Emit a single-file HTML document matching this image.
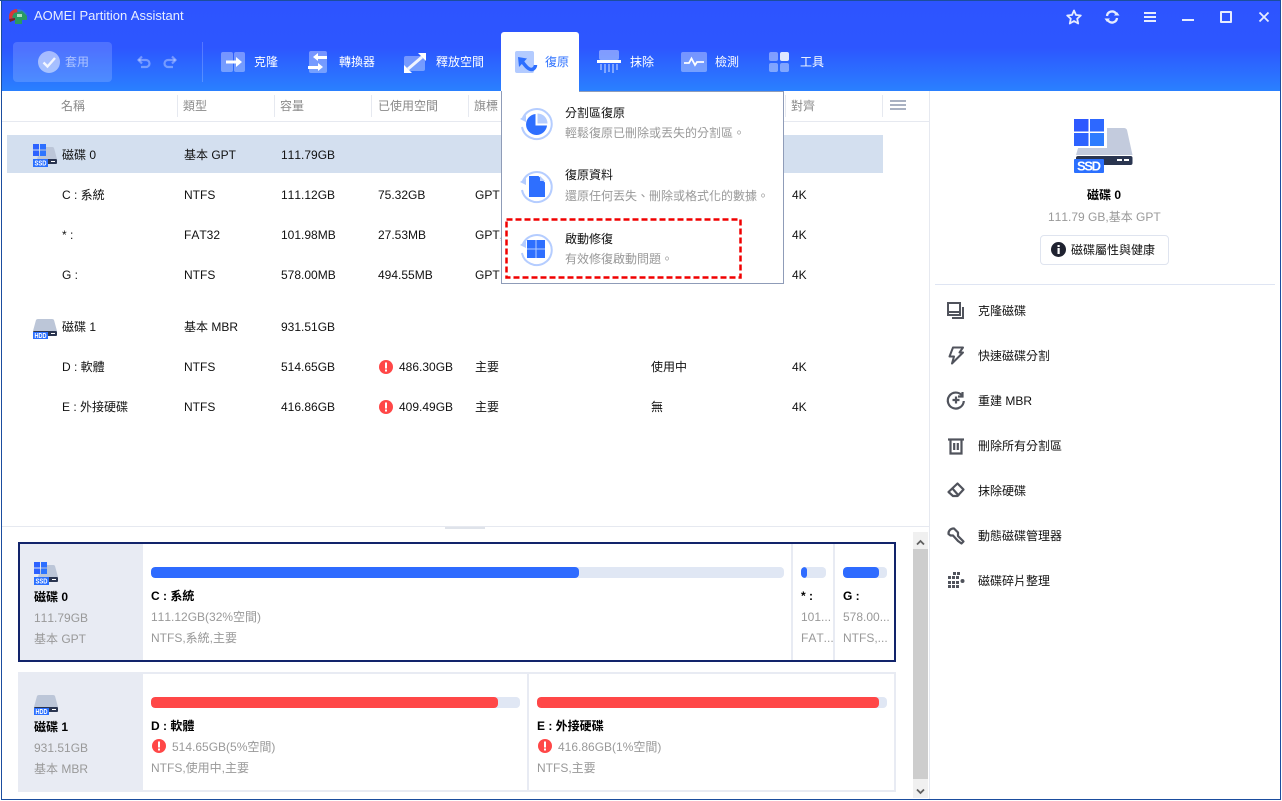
<!DOCTYPE html>
<html lang="zh-Hant"><head><meta charset="utf-8"><title>AOMEI Partition Assistant</title>
<style>
html,body{margin:0;padding:0;background:#fff}
body{width:1282px;height:801px;position:relative;overflow:hidden;font-family:"Liberation Sans","Noto Sans CJK SC",sans-serif;font-size:12px;color:#111;font-kerning:none}
.a{position:absolute}
.t{position:absolute;white-space:nowrap;line-height:16px;font-size:12px}
.g{color:#999}.h{color:#8a8a8a}.w{color:#fff}.b{font-weight:bold;color:#000}
.l{position:absolute;background:#e6e9f0}
.bar{position:absolute;height:11px;border-radius:4px;background:#e0e7f4;overflow:hidden}
.bar i{display:block;height:11px;border-radius:4px}
svg{position:absolute;overflow:visible}
</style></head><body>

<!-- header -->
<div class="a" style="left:1px;top:0;width:1280px;height:91px;background:linear-gradient(#2d54ff 0,#2d56ff 52%,#2a80ff 100%)"></div>
<div class="a" style="left:0;top:0;width:1281px;height:1px;background:#1b4d9e"></div>
<div class="a" style="left:1px;top:0;width:1px;height:800px;background:#1b4d9e"></div>
<div class="a" style="left:1280px;top:0;width:1px;height:800px;background:#1b4d9e"></div>
<div class="a" style="left:1px;top:799px;width:1280px;height:1px;background:#1b4d9e"></div>

<svg style="left:9px;top:9px" width="18" height="15" viewBox="0 0 18 15"><path d="M0 7C0 3 4 0 8 0L9 6L5 7L5 9L0 10Z" fill="#d9363a"/><path d="M8 0C12 0 16 2 18 6L14 5L9 3Z" fill="#2f7fd0"/><path d="M5 4L13 2L18 7V11L13 11V15H6V10L3 8Z" fill="#2a9a63"/><path d="M0 10L6 9V11L1 13Z" fill="#7d2420"/><path d="M8 5H13V8H8Z" fill="#a6e0bd"/></svg>
<div class="t w" style="left:34px;top:8px;font-size:13px;color:#e8eeff">AOMEI Partition Assistant</div>

<!-- window controls -->
<svg style="left:1066px;top:9px" width="16" height="16" viewBox="0 0 16 16"><path d="M8 1.500L10 6L14.800 6.500L11.200 9.700L12.200 14.500L8 12L3.800 14.500L4.800 9.700L1.200 6.500L6 6Z" fill="none" stroke="#e6ecff" stroke-width="1.800" stroke-linejoin="round"/></svg>
<svg style="left:1104px;top:9px" width="16" height="16" viewBox="0 0 16 16" fill="none" stroke="#e6ecff" stroke-width="2.300"><path d="M3 7A5 5 0 0 1 12 4.500"/><path d="M13 9A5 5 0 0 1 4 11.500"/><path d="M10 6.500H15.500L13 3Z" fill="#e6ecff" stroke="none"/><path d="M.5 9.500H6L3 13Z" fill="#e6ecff" stroke="none"/></svg>
<div class="a" style="left:1144px;top:12px;width:12px;height:2px;background:#e6ecff"></div>
<div class="a" style="left:1144px;top:16px;width:12px;height:2px;background:#e6ecff"></div>
<div class="a" style="left:1144px;top:20px;width:12px;height:2px;background:#e6ecff"></div>
<div class="a" style="left:1182px;top:19px;width:12px;height:2px;background:#e6ecff"></div>
<div class="a" style="left:1220px;top:11px;width:8px;height:8px;border:2px solid #e6ecff;border-radius:1px"></div>
<svg style="left:1258px;top:11px" width="12" height="12" viewBox="0 0 12 12"><path d="M1.500 1.500L10.500 10.500M10.500 1.500L1.500 10.500" stroke="#e6ecff" stroke-width="1.800"/></svg>

<!-- toolbar -->
<div class="a" style="left:13px;top:42px;width:99px;height:40px;background:rgba(255,255,255,.16);border-radius:4px"></div>
<svg style="left:38px;top:51px" width="22" height="22" viewBox="0 0 22 22"><circle cx="11" cy="11" r="11" fill="#fff" fill-opacity=".5"/><path d="M5.500 11.500L9.500 15.500L17 7" fill="none" stroke="#fff" stroke-opacity=".85" stroke-width="2.400"/></svg>
<div class="t" style="left:65px;top:54px;color:rgba(255,255,255,.55)">套用</div>
<svg style="left:137px;top:56px" width="14" height="12" viewBox="0 0 14 12" fill="none" stroke="#fff" stroke-opacity=".35" stroke-width="2.200"><path d="M1.500 4H9A3.500 3.500 0 0 1 9 11H4"/><path d="M5 .5L1.500 4L5 7.500"/></svg>
<svg style="left:163px;top:56px" width="14" height="12" viewBox="0 0 14 12" fill="none" stroke="#fff" stroke-opacity=".35" stroke-width="2.200"><path d="M12.500 4H5A3.500 3.500 0 0 0 5 11H10"/><path d="M9 .5L12.500 4L9 7.500"/></svg>
<div class="a" style="left:202px;top:42px;width:1px;height:40px;background:rgba(255,255,255,.2)"></div>

<svg style="left:221px;top:52px" width="24" height="20" viewBox="0 0 24 20"><rect width="12" height="20" rx="2" fill="#fff" fill-opacity=".35"/><rect x="13" width="11" height="20" rx="2" fill="#fff" fill-opacity=".35"/><path d="M5 8.500H15V5L21 10L15 15V11.500H5Z" fill="#fff"/></svg>
<div class="t w" style="left:254px;top:54px">克隆</div>

<svg style="left:308px;top:51px" width="20" height="22" viewBox="0 0 20 22"><rect x="1" width="18" height="22" rx="2" fill="#fff" fill-opacity=".35"/><path d="M19 5H10V2L5 6L10 10V8H19Z" fill="#fff"/><path d="M0 15H10V12L15 16L10 20V18H0Z" fill="#fff"/></svg>
<div class="t w" style="left:339px;top:54px">轉換器</div>

<svg style="left:404px;top:53px" width="22" height="20" viewBox="0 0 22 20"><rect y="3" width="21" height="15" rx="2" fill="#fff" fill-opacity=".35"/><path d="M18 4L4 16" stroke="#fff" stroke-opacity=".9" stroke-width="3"/><path d="M22 0V8L14 0Z" fill="#fff"/><path d="M0 20V12L8 20Z" fill="#fff"/></svg>
<div class="t w" style="left:436px;top:54px">釋放空間</div>

<div class="a" style="left:501px;top:32px;width:78px;height:60px;background:#fff;border-radius:3px 3px 0 0"></div>
<svg style="left:515px;top:51px" width="22" height="22" viewBox="0 0 22 22"><rect width="19" height="22" rx="2" fill="#b3cbff"/><path d="M6 9C10 14 13 19 17 18.500C19 18 20.500 16 20.500 14" fill="none" stroke="#2e6fff" stroke-width="3.500"/><path d="M3 6L12 7.500L4 16Z" fill="#2e6fff"/></svg>
<div class="t" style="left:545px;top:54px;color:#2f72ff">復原</div>

<svg style="left:597px;top:50px" width="24" height="23" viewBox="0 0 24 23"><rect x="2" width="20" height="10" rx="2" fill="#fff" fill-opacity=".4"/><rect y="10" width="24" height="3" fill="#fff"/><path d="M3 14h2v6H3zM7 14h2v9H7zM11 14h2v8h-2zM15 14h2v9h-2zM19 14h2v6h-2z" fill="#fff" fill-opacity=".4"/></svg>
<div class="t w" style="left:630px;top:54px">抹除</div>

<svg style="left:681px;top:52px" width="26" height="20" viewBox="0 0 26 20"><rect width="26" height="20" rx="2" fill="#fff" fill-opacity=".35"/><path d="M3 11H8L10.500 6.500L14 13L16 10H23" fill="none" stroke="#fff" stroke-width="1.800"/></svg>
<div class="t w" style="left:715px;top:54px">檢測</div>

<svg style="left:769px;top:52px" width="20" height="20" viewBox="0 0 20 20" fill="#fff" fill-opacity=".4"><rect width="9" height="9" rx="2"/><rect x="11" width="9" height="9" rx="2" fill-opacity=".85"/><rect y="11" width="9" height="9" rx="2"/><rect x="11" y="11" width="9" height="9" rx="2"/></svg>
<div class="t w" style="left:800px;top:54px">工具</div>

<!-- table header -->
<div class="t h" style="left:61px;top:98px">名稱</div>
<div class="t h" style="left:183px;top:98px">類型</div>
<div class="t h" style="left:280px;top:98px">容量</div>
<div class="t h" style="left:378px;top:98px">已使用空間</div>
<div class="t h" style="left:474px;top:98px">旗標</div>
<div class="t h" style="left:791px;top:98px">對齊</div>
<div class="l" style="left:177px;top:95px;width:1px;height:22px"></div>
<div class="l" style="left:274px;top:95px;width:1px;height:22px"></div>
<div class="l" style="left:371px;top:95px;width:1px;height:22px"></div>
<div class="l" style="left:468px;top:95px;width:1px;height:22px"></div>
<div class="l" style="left:785px;top:95px;width:1px;height:22px"></div>
<div class="l" style="left:882px;top:95px;width:1px;height:22px"></div>
<div class="a" style="left:890px;top:100px;width:16px;height:2px;background:#a9b1c2"></div>
<div class="a" style="left:890px;top:104px;width:16px;height:2px;background:#a9b1c2"></div>
<div class="a" style="left:890px;top:108px;width:16px;height:2px;background:#a9b1c2"></div>
<div class="l" style="left:2px;top:121px;width:927px;height:1px"></div>

<!-- rows -->
<div class="a" style="left:7px;top:135px;width:876px;height:38px;background:#d3dfef"></div>

<svg style="left:33px;top:144px" width="24" height="24" viewBox="0 0 24 24"><path d="M8 3H19.500Q20.500 3 21 4L24 15H4Z" fill="#bcc6d8"/><rect x="4" y="15" width="20" height="5" rx="1" fill="#2a3550"/><rect x="18" y="17" width="4" height="1" fill="#fff"/><rect y="0" width="6" height="5.500" fill="#2d62ff"/><rect x="7" y="0" width="6" height="5.500" fill="#2d6fff"/><rect y="6.500" width="6" height="5.500" fill="#2d62ff"/><rect x="7" y="6.500" width="6" height="5.500" fill="#2d75ff"/><rect y="15" width="15" height="8" fill="#2b70ff"/><text x="1.500" y="21.500" font-size="7" font-weight="bold" fill="#fff" font-family="Liberation Sans" textLength="12" lengthAdjust="spacingAndGlyphs">SSD</text></svg>
<div class="t" style="left:62px;top:147px">磁碟 0</div><div class="t" style="left:184px;top:147px">基本 GPT</div><div class="t" style="left:281px;top:147px">111.79GB</div>

<div class="t" style="left:62px;top:187px">C : 系統</div><div class="t" style="left:184px;top:187px">NTFS</div><div class="t" style="left:281px;top:187px">111.12GB</div><div class="t" style="left:378px;top:187px">75.32GB</div><div class="t" style="left:475px;top:187px">GPT</div><div class="t" style="left:792px;top:187px">4K</div>

<div class="t" style="left:62px;top:227px">* :</div><div class="t" style="left:184px;top:227px">FAT32</div><div class="t" style="left:281px;top:227px">101.98MB</div><div class="t" style="left:378px;top:227px">27.53MB</div><div class="t" style="left:475px;top:227px">GPT,</div><div class="t" style="left:792px;top:227px">4K</div>

<div class="t" style="left:62px;top:267px">G :</div><div class="t" style="left:184px;top:267px">NTFS</div><div class="t" style="left:281px;top:267px">578.00MB</div><div class="t" style="left:378px;top:267px">494.55MB</div><div class="t" style="left:475px;top:267px">GPT</div><div class="t" style="left:792px;top:267px">4K</div>

<svg style="left:33px;top:319px" width="24" height="20" viewBox="0 0 24 20"><path d="M5 0H19Q20.500 0 21 1L24 12H0L3 1Q3.500 0 5 0Z" fill="#bcc6d8"/><rect y="12" width="24" height="5" rx="1" fill="#2a3550"/><rect x="18" y="14" width="4" height="1" fill="#fff"/><rect y="13" width="15" height="7" fill="#2b70ff"/><text x="1.500" y="19" font-size="7" font-weight="bold" fill="#fff" font-family="Liberation Sans" textLength="12" lengthAdjust="spacingAndGlyphs">HDD</text></svg>
<div class="t" style="left:62px;top:319px">磁碟 1</div><div class="t" style="left:184px;top:319px">基本 MBR</div><div class="t" style="left:281px;top:319px">931.51GB</div>

<div class="t" style="left:62px;top:359px">D : 軟體</div><div class="t" style="left:184px;top:359px">NTFS</div><div class="t" style="left:281px;top:359px">514.65GB</div>
<svg style="left:379px;top:360px" width="14" height="14" viewBox="0 0 14 14"><circle cx="7" cy="7" r="7" fill="#ff4747"/><rect x="6" y="2.500" width="2" height="6" fill="#fff"/><rect x="6" y="9.500" width="2" height="2" fill="#fff"/></svg>
<div class="t" style="left:399px;top:359px">486.30GB</div><div class="t" style="left:475px;top:359px">主要</div><div class="t" style="left:651px;top:359px">使用中</div><div class="t" style="left:792px;top:359px">4K</div>

<div class="t" style="left:62px;top:399px">E : 外接硬碟</div><div class="t" style="left:184px;top:399px">NTFS</div><div class="t" style="left:281px;top:399px">416.86GB</div>
<svg style="left:379px;top:400px" width="14" height="14" viewBox="0 0 14 14"><circle cx="7" cy="7" r="7" fill="#ff4747"/><rect x="6" y="2.500" width="2" height="6" fill="#fff"/><rect x="6" y="9.500" width="2" height="2" fill="#fff"/></svg>
<div class="t" style="left:399px;top:399px">409.49GB</div><div class="t" style="left:475px;top:399px">主要</div><div class="t" style="left:651px;top:399px">無</div><div class="t" style="left:792px;top:399px">4K</div>

<!-- dropdown -->
<div class="a" style="left:501px;top:91px;width:281px;height:191px;background:#fff;border:1px solid #8f9cb8"></div>
<div class="a" style="left:502px;top:90px;width:77px;height:3px;background:#fff"></div>

<svg style="left:520px;top:107px" width="32" height="34" viewBox="0 0 32 34"><path d="M3 11A15 15 0 1 1 2 20" fill="none" stroke="#b5cdff" stroke-width="2"/><path d="M0 12L6 8L6 15Z" fill="#b5cdff"/><path d="M15.500 7A10.500 10.500 0 1 0 27 18.500H15.500Z" fill="#2e6fff"/><path d="M17.500 6.500A10 10 0 0 1 27.500 16.500H17.500Z" fill="#b5cdff"/></svg>
<div class="t" style="left:565px;top:105px;color:#111">分割區復原</div>
<div class="t g" style="left:565px;top:125px">輕鬆復原已刪除或丟失的分割區。</div>

<svg style="left:520px;top:170px" width="32" height="34" viewBox="0 0 32 34"><path d="M3 11A15 15 0 1 1 2 20" fill="none" stroke="#b5cdff" stroke-width="2"/><path d="M0 12L6 8L6 15Z" fill="#b5cdff"/><path d="M9 6H18.500L25 12.500V27H9Z" fill="#2e6fff"/><path d="M20 6L25 11H20Z" fill="#b5cdff"/></svg>
<div class="t" style="left:565px;top:167px">復原資料</div>
<div class="t g" style="left:565px;top:188px">還原任何丟失、刪除或格式化的數據。</div>

<svg style="left:520px;top:233px" width="32" height="34" viewBox="0 0 32 34"><path d="M3 11A15 15 0 1 1 2 20" fill="none" stroke="#b5cdff" stroke-width="2"/><path d="M0 12L6 8L6 15Z" fill="#b5cdff"/><rect x="7" y="7" width="18" height="18" fill="#2e6fff"/><path d="M16 7V25M7 16H25" stroke="#b5cdff" stroke-width="1"/></svg>
<div class="t" style="left:565px;top:231px">啟動修復</div>
<div class="t g" style="left:565px;top:251px">有效修復啟動問題。</div>

<svg style="left:0;top:0" width="1282" height="801"><rect x="506.500" y="219.500" width="234" height="58" fill="none" stroke="#f00000" stroke-width="2.500" stroke-dasharray="6 3"/></svg>

<!-- right panel -->
<div class="l" style="left:929px;top:91px;width:1px;height:708px"></div>
<svg style="left:1074px;top:119px" width="59" height="54" viewBox="0 0 59 54"><path d="M10 9H50Q52 9 53 11L58.500 36H2Z" fill="#c3cbdd"/><rect x="2" y="37" width="56.500" height="9" rx="2" fill="#2a3550"/><rect x="43" y="40" width="5" height="2" fill="#fff"/><rect x="50" y="40" width="5" height="2" fill="#fff"/><rect x="0" y="0" width="33" height="29" fill="#fff"/><rect width="14.500" height="12.500" fill="#2d58ff"/><rect x="16" width="14" height="12.500" fill="#2d68ff"/><rect y="14" width="14.500" height="13" fill="#2d62ff"/><rect x="16" y="14" width="14" height="13" fill="#2d7cff"/><rect y="40" width="30" height="14" rx="1" fill="#2b70ff"/><text x="3" y="51.500" font-size="13" font-weight="bold" fill="#fff" font-family="Liberation Sans" textLength="24">SSD</text></svg>
<div class="t b" style="left:1087px;top:187px">磁碟 0</div>
<div class="t g" style="left:1048px;top:209px">111.79 GB,基本 GPT</div>
<div class="a" style="left:1040px;top:235px;width:127px;height:28px;border:1px solid #dfe4ef;border-radius:4px"></div>
<svg style="left:1051px;top:242px" width="15" height="15" viewBox="0 0 15 15"><circle cx="7.500" cy="7.500" r="7.500" fill="#1f2230"/><rect x="6.500" y="6" width="2.200" height="6" fill="#fff"/><rect x="6.500" y="3" width="2.200" height="2" fill="#fff"/></svg>
<div class="t" style="left:1071px;top:242px">磁碟屬性與健康</div>
<div class="a" style="left:935px;top:284px;width:340px;height:1px;background:#dfe5f3"></div>

<svg style="left:946px;top:301px" width="19" height="19" viewBox="0 0 19 19" fill="none" stroke="#50535c" stroke-width="2"><rect x="2" y="2" width="12" height="12"/><path d="M2 11H14"/><path d="M17 6V17H6"/></svg>
<div class="t" style="left:978px;top:303px">克隆磁碟</div>
<svg style="left:947px;top:346px" width="18" height="19" viewBox="0 0 18 19" fill="none" stroke="#50535c" stroke-width="2" stroke-linejoin="round"><path d="M6 1.500H16L12.500 6.500H16L5 17.500L7 10.500H2.500Z"/></svg>
<div class="t" style="left:978px;top:348px">快速磁碟分割</div>
<svg style="left:947px;top:391px" width="18" height="18" viewBox="0 0 18 18" fill="none" stroke="#50535c" stroke-width="2.200"><path d="M15 4.500A8 8 0 1 0 16.800 10"/><path d="M15.500 1V5.500H11"/><path d="M9 5.500V12.500M5.500 9H12.500"/></svg>
<div class="t" style="left:978px;top:393px">重建 MBR</div>
<svg style="left:948px;top:437px" width="16" height="18" viewBox="0 0 16 18" fill="none" stroke="#50535c" stroke-width="2.200"><path d="M0 2.500H16"/><path d="M2.500 2.500V16.500H13.500V2.500"/><path d="M6.200 6V13M9.800 6V13"/></svg>
<div class="t" style="left:978px;top:438px">刪除所有分割區</div>
<svg style="left:947px;top:482px" width="18" height="16" viewBox="0 0 18 16" fill="none" stroke="#50535c" stroke-width="2.200" stroke-linejoin="round"><path d="M10.500 1.500L16.500 7.500L10.500 14H6L1.500 10Z"/><path d="M6 14.500L4 8" stroke-width="0"/><path d="M5 6L12 14"/></svg>
<div class="t" style="left:978px;top:483px">抹除硬碟</div>
<svg style="left:947px;top:527px" width="18" height="18" viewBox="0 0 18 18" fill="none" stroke="#50535c" stroke-width="2.200" stroke-linejoin="round"><path d="M7 1.500A5 5 0 0 0 1.500 7L3.500 8.500L6 8.500L11 14L14.500 16.500L16.500 14.500L11 9V5.500Z"/></svg>
<div class="t" style="left:978px;top:528px">動態磁碟管理器</div>
<svg style="left:948px;top:572px" width="17" height="17" viewBox="0 0 17 17" fill="#50535c"><rect x="5" y="0" width="3" height="3"/><rect x="9" y="0" width="3" height="3"/><rect x="0" y="4" width="3" height="3"/><rect x="4" y="4" width="3" height="3"/><rect x="8" y="4" width="3" height="3"/><rect x="0" y="9" width="3" height="3"/><rect x="4" y="9" width="3" height="3"/><rect x="8" y="9" width="3" height="3"/><circle cx="14.500" cy="9" r="2"/><rect x="0" y="13" width="3" height="3"/><rect x="4" y="13" width="3" height="3"/><rect x="8" y="13" width="3" height="3"/></svg>
<div class="t" style="left:978px;top:573px">磁碟碎片整理</div>

<!-- bottom pane -->
<div class="l" style="left:2px;top:526px;width:927px;height:1px"></div>
<div class="a" style="left:445px;top:527px;width:40px;height:2px;background:#dfe3ea"></div>

<div class="a" style="left:18px;top:542px;width:874px;height:116px;border:2px solid #12246b;background:#fff"></div>
<div class="a" style="left:20px;top:544px;width:123px;height:116px;background:#e8ebf3"></div>
<svg style="left:34px;top:562px" width="24" height="24" viewBox="0 0 24 24"><path d="M8 3H19.500Q20.500 3 21 4L24 15H4Z" fill="#bcc6d8"/><rect x="4" y="15" width="20" height="5" rx="1" fill="#2a3550"/><rect x="18" y="17" width="4" height="1" fill="#fff"/><rect y="0" width="6" height="5.500" fill="#2d62ff"/><rect x="7" y="0" width="6" height="5.500" fill="#2d6fff"/><rect y="6.500" width="6" height="5.500" fill="#2d62ff"/><rect x="7" y="6.500" width="6" height="5.500" fill="#2d75ff"/><rect y="15" width="15" height="8" fill="#2b70ff"/><text x="1.500" y="21.500" font-size="7" font-weight="bold" fill="#fff" font-family="Liberation Sans" textLength="12" lengthAdjust="spacingAndGlyphs">SSD</text></svg>
<div class="t b" style="left:34px;top:589px">磁碟 0</div>
<div class="t g" style="left:34px;top:610px">111.79GB</div>
<div class="t g" style="left:34px;top:631px">基本 GPT</div>

<div class="bar" style="left:151px;top:567px;width:633px"><i style="width:428px;background:#2e6bff"></i></div>
<div class="t b" style="left:151px;top:588px">C : 系統</div>
<div class="t g" style="left:151px;top:609px">111.12GB(32%空間)</div>
<div class="t g" style="left:151px;top:630px">NTFS,系統,主要</div>
<div class="a" style="left:791px;top:544px;width:2px;height:116px;background:#e8ebf3"></div>
<div class="bar" style="left:801px;top:567px;width:25px"><i style="width:6px;background:#2e6bff"></i></div>
<div class="t b" style="left:801px;top:588px">* :</div>
<div class="t g" style="left:801px;top:609px">101...</div>
<div class="t g" style="left:801px;top:630px">FAT...</div>
<div class="a" style="left:833px;top:544px;width:2px;height:116px;background:#e8ebf3"></div>
<div class="bar" style="left:843px;top:567px;width:44px"><i style="width:36px;background:#2e6bff"></i></div>
<div class="t b" style="left:843px;top:588px">G :</div>
<div class="t g" style="left:843px;top:609px">578.00...</div>
<div class="t g" style="left:843px;top:630px">NTFS,...</div>

<div class="a" style="left:18px;top:672px;width:874px;height:116px;border:2px solid #e8ebf3;background:#fff"></div>
<div class="a" style="left:20px;top:674px;width:123px;height:116px;background:#e8ebf3"></div>
<svg style="left:34px;top:695px" width="24" height="20" viewBox="0 0 24 20"><path d="M5 0H19Q20.500 0 21 1L24 12H0L3 1Q3.500 0 5 0Z" fill="#bcc6d8"/><rect y="12" width="24" height="5" rx="1" fill="#2a3550"/><rect x="18" y="14" width="4" height="1" fill="#fff"/><rect y="13" width="15" height="7" fill="#2b70ff"/><text x="1.500" y="19" font-size="7" font-weight="bold" fill="#fff" font-family="Liberation Sans" textLength="12" lengthAdjust="spacingAndGlyphs">HDD</text></svg>
<div class="t b" style="left:34px;top:719px">磁碟 1</div>
<div class="t g" style="left:34px;top:740px">931.51GB</div>
<div class="t g" style="left:34px;top:761px">基本 MBR</div>

<div class="bar" style="left:151px;top:697px;width:369px"><i style="width:347px;background:#ff4747"></i></div>
<div class="t b" style="left:151px;top:718px">D : 軟體</div>
<svg style="left:152px;top:739px" width="14" height="14" viewBox="0 0 14 14"><circle cx="7" cy="7" r="7" fill="#ff4747"/><rect x="6" y="2.500" width="2" height="6" fill="#fff"/><rect x="6" y="9.500" width="2" height="2" fill="#fff"/></svg>
<div class="t g" style="left:172px;top:739px">514.65GB(5%空間)</div>
<div class="t g" style="left:151px;top:760px">NTFS,使用中,主要</div>
<div class="a" style="left:527px;top:674px;width:2px;height:116px;background:#e8ebf3"></div>
<div class="bar" style="left:537px;top:697px;width:350px"><i style="width:342px;background:#ff4747"></i></div>
<div class="t b" style="left:537px;top:718px">E : 外接硬碟</div>
<svg style="left:538px;top:739px" width="14" height="14" viewBox="0 0 14 14"><circle cx="7" cy="7" r="7" fill="#ff4747"/><rect x="6" y="2.500" width="2" height="6" fill="#fff"/><rect x="6" y="9.500" width="2" height="2" fill="#fff"/></svg>
<div class="t g" style="left:558px;top:739px">416.86GB(1%空間)</div>
<div class="t g" style="left:537px;top:760px">NTFS,主要</div>

<!-- scrollbar -->
<div class="a" style="left:913px;top:532px;width:15px;height:266px;background:#f0f0f0"></div>
<div class="a" style="left:913px;top:549px;width:15px;height:230px;background:#cdcdcd"></div>
<svg style="left:916px;top:539px" width="9" height="7" viewBox="0 0 9 7"><path d="M1 5.500L4.500 2L8 5.500" fill="none" stroke="#606060" stroke-width="1.800"/></svg>
<svg style="left:916px;top:788px" width="9" height="7" viewBox="0 0 9 7"><path d="M1 1.500L4.500 5L8 1.500" fill="none" stroke="#606060" stroke-width="1.800"/></svg>

</body></html>
